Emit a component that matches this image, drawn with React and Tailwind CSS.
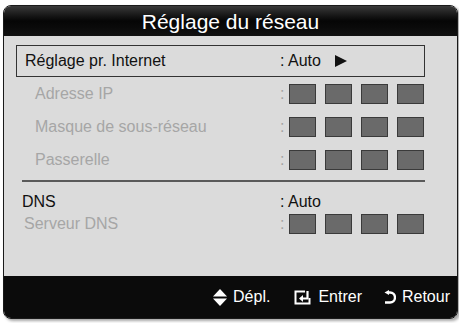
import React from 'react';

const Boxes = () => (
    <div className="flex items-center">
        <span className="w-[9px] text-[#a3a3a3]">:</span>
        <div className="flex gap-[9px]">
            {[0, 1, 2, 3].map((i) => (
                <div key={i} className="w-[27px] h-[20px] bg-[#6a6a6a] border border-[#3a3a3a]" />
            ))}
        </div>
    </div>
);

const SubRow = ({ label, indent = 'pl-[19px]', height = 'h-[33px]', color = 'text-[#a6a6a6]', children }) => (
    <div className={`flex items-center ${height}`}>
        <div className={`w-[264px] ${indent} ${color}`}>{label}</div>
        {children}
    </div>
);

const UpDown = () => (
    <svg width="14" height="17" viewBox="0 0 14 17">
        <path d="M7 0 L14 7.5 H0 Z" fill="white" />
        <path d="M0 9.5 H14 L7 17 Z" fill="white" />
    </svg>
);

const EnterIcon = () => (
    <svg width="17" height="15" viewBox="0 0 17 15">
        <path d="M11 1.5 H1.5 V13.5 H15.5 V8" fill="none" stroke="white" strokeWidth="2" />
        <path d="M13.5 1 V8.5 H8" fill="none" stroke="white" strokeWidth="2.2" />
        <path d="M5 8.5 L9 5 V12 Z" fill="white" />
    </svg>
);

const ReturnIcon = () => (
    <svg width="12" height="15" viewBox="0 0 12 15">
        <path d="M0.5 2.5 L5 0 V5 Z" fill="white" />
        <path d="M4 2.5 H6 A5 5 0 0 1 6 12.5 H1" fill="none" stroke="white" strokeWidth="2.4" />
    </svg>
);

export default function App() {
    return (
        <div
            className="w-[459px] h-[323px] bg-white pt-[5px] pl-[3px]"
            style={{ fontFamily: '"Liberation Sans", Arial, sans-serif' }}
        >
            <div className="w-[455px] h-[314px] flex flex-col rounded-[8px] overflow-hidden border border-[#1a1a1a] shadow-[2px_2px_3px_rgba(0,0,0,0.35)]">
                {/* Title */}
                <div className="h-[30px] shrink-0 flex items-center justify-center bg-linear-to-b from-[#3a3a3a] via-[#060606] to-[#111] text-white text-[21px] leading-none">
                    Réglage du réseau
                </div>

                {/* Body */}
                <div className="flex-1 bg-[#dbdbdb] pl-[12px] pt-[9px] text-[16px] leading-none">
                    <div className="w-[409px]">
                        <div className="h-[32px] border border-[#333] flex items-center text-[#111]">
                            <div className="w-[263px] pl-[8px]">Réglage pr. Internet</div>
                            <span>: Auto</span>
                            <svg className="ml-[14px]" width="12" height="12" viewBox="0 0 12 12">
                                <path d="M0 0 L12 6 L0 12 Z" fill="#111" />
                            </svg>
                        </div>

                        <SubRow label="Adresse IP"><Boxes /></SubRow>
                        <SubRow label="Masque de sous-réseau"><Boxes /></SubRow>
                        <SubRow label="Passerelle"><Boxes /></SubRow>

                        <div className="ml-[6px] mt-[4px] h-[2px] bg-[#5a5a5a]" />

                        <div className="mt-[9px]">
                            <SubRow label="DNS" indent="pl-[6px]" height="h-[22px]" color="text-[#111]">
                                <span className="text-[#111]">: Auto</span>
                            </SubRow>
                            <SubRow label="Serveur DNS" indent="pl-[8px]" height="h-[22px]">
                                <Boxes />
                            </SubRow>
                        </div>
                    </div>
                </div>

                {/* Footer */}
                <div className="h-[42px] shrink-0 bg-[#0b0b0b] flex items-center justify-end pr-[7px] text-white text-[16px] leading-none">
                    <div className="flex items-center gap-[6px]">
                        <UpDown />
                        <span>Dépl.</span>
                    </div>
                    <div className="flex items-center gap-[7px] ml-[24px]">
                        <EnterIcon />
                        <span>Entrer</span>
                    </div>
                    <div className="flex items-center gap-[6px] ml-[22px]">
                        <ReturnIcon />
                        <span>Retour</span>
                    </div>
                </div>
            </div>
        </div>
    );
}
